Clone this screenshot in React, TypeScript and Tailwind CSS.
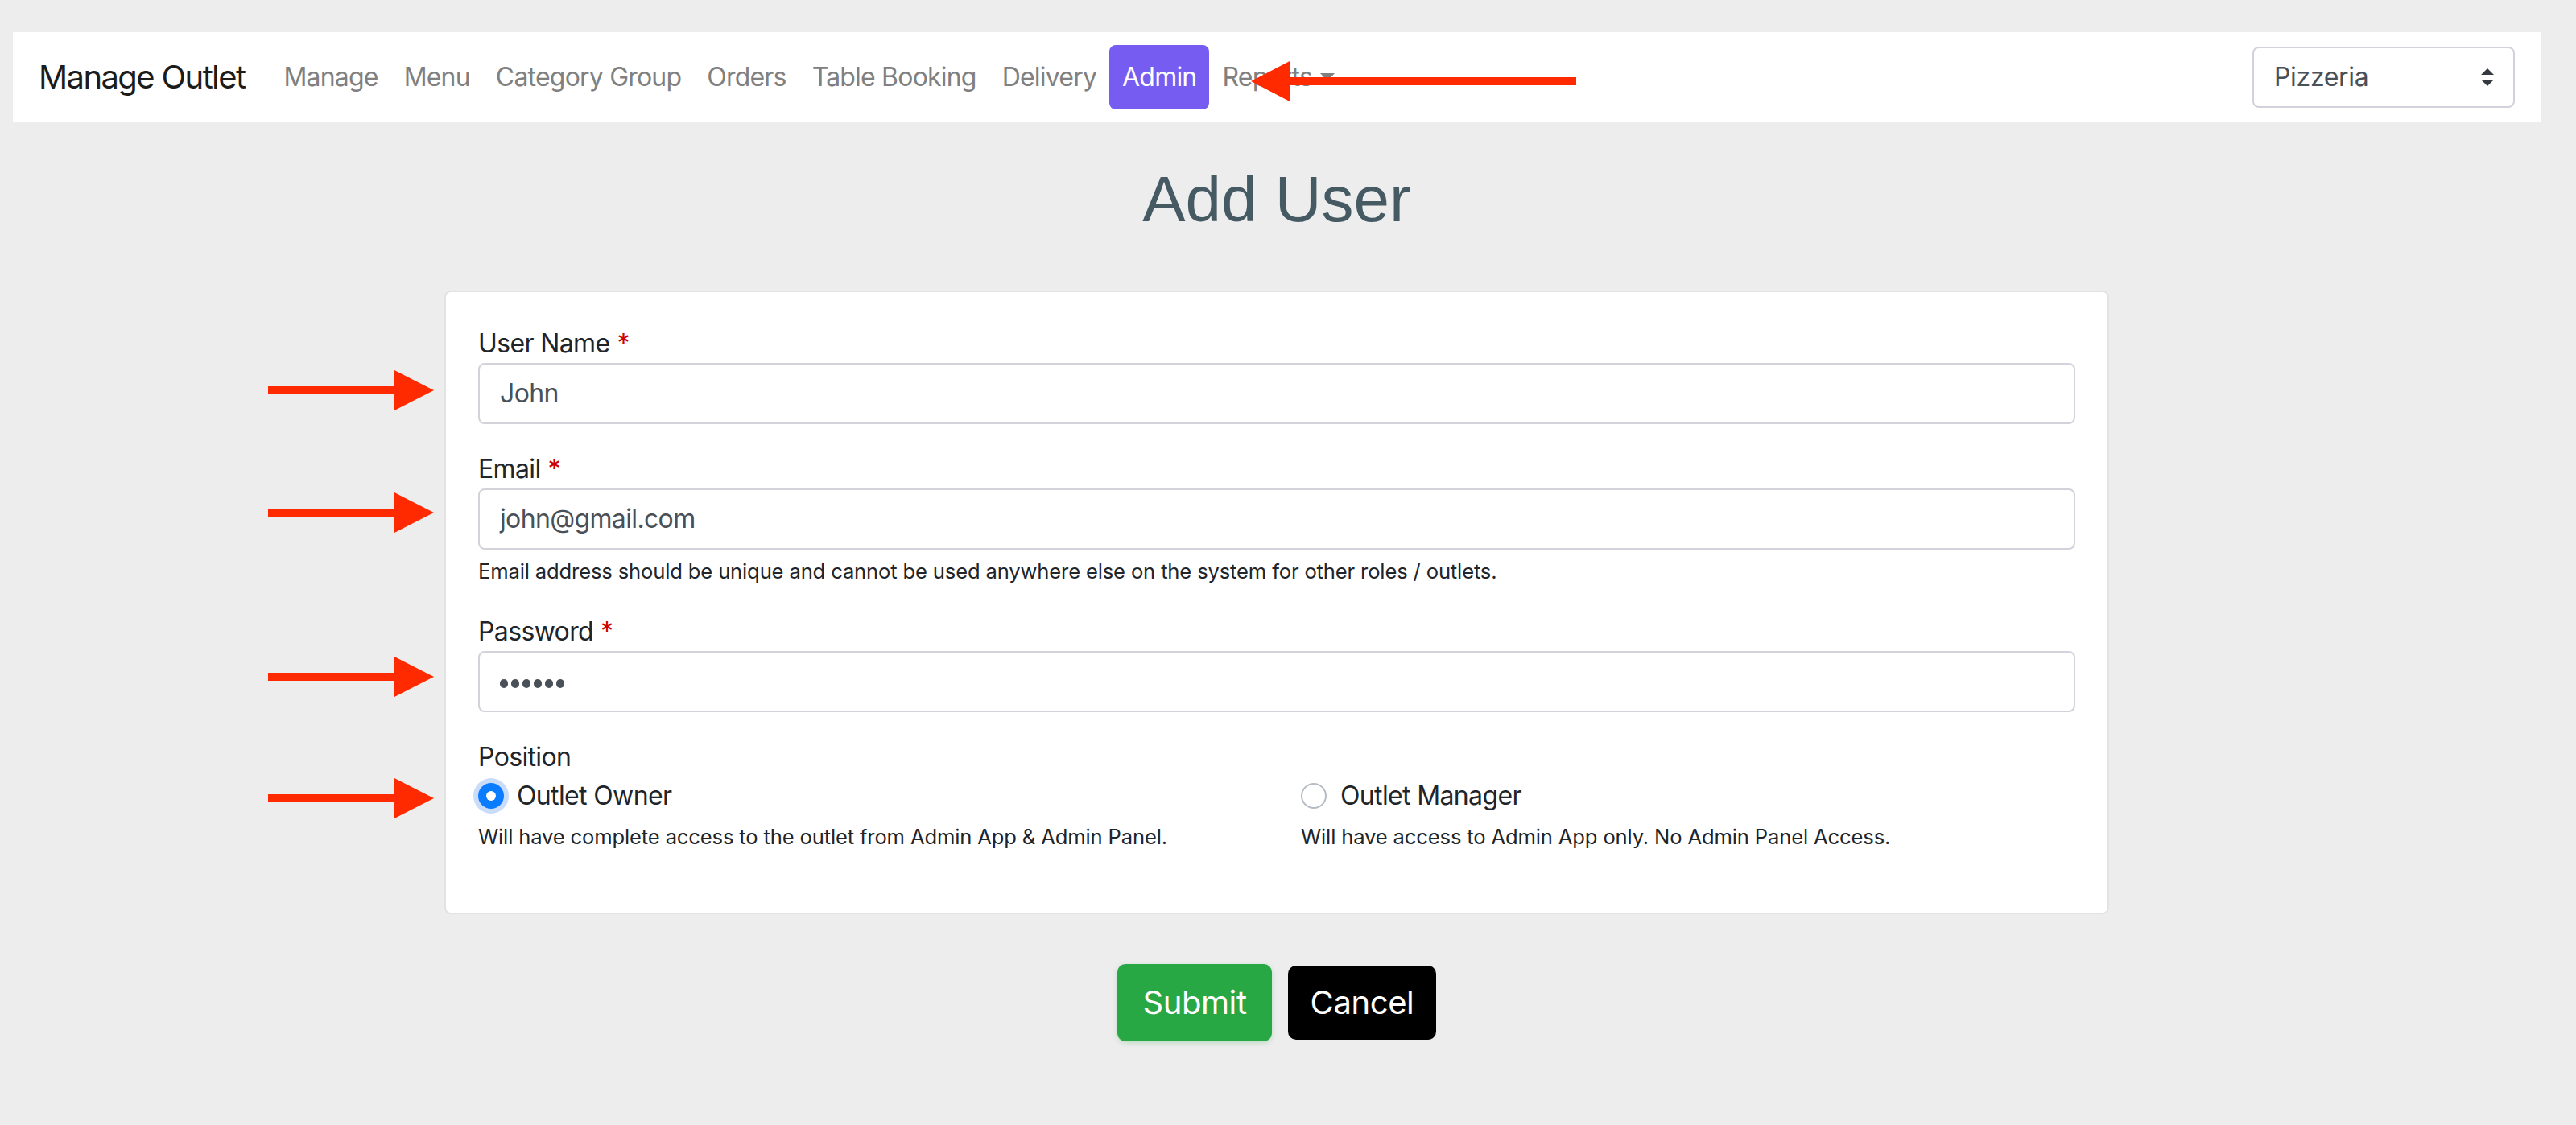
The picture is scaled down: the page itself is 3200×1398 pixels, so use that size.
import React from "react";

const navLinks = ["Manage", "Menu", "Category Group", "Orders", "Table Booking", "Delivery"];

function RightArrow({ top }: { top: number }) {
  return (
    <svg
      className="absolute left-[333px]"
      style={{ top }}
      width="206"
      height="50"
      viewBox="0 0 206 50"
    >
      <path d="M0 20H157V0L206 25L157 50V30H0Z" fill="#ff2a00" />
    </svg>
  );
}

function Field({
  label,
  required,
  children,
}: {
  label: string;
  required?: boolean;
  children: React.ReactNode;
}) {
  return (
    <div className="mb-[32px] flex flex-col">
      <div className="text-[32px] leading-[48px] tracking-[-0.02em] text-[#212529]">
        {label}
        {required && <span className="ml-[9px] text-[#cc0000]">*</span>}
      </div>
      {children}
    </div>
  );
}

function Control({ children }: { children: React.ReactNode }) {
  return (
    <div className="flex h-[76px] items-center rounded-[8px] border-2 border-[#d2d3da] bg-white px-[25px] text-[32px] tracking-[-0.02em] text-[#495057]">
      {children}
    </div>
  );
}

export default function App() {
  return (
    <div
      className="relative min-h-screen w-[3200px] bg-[#ededed] pt-[40px]"
      style={{ fontFamily: "Inter, 'Noto Sans', sans-serif" }}
    >
      <div className="w-[3172px]">
        {/* navbar */}
        <nav className="mx-[16px] flex h-[112px] items-center bg-white px-[32px]">
          <span className="mr-[32px] text-[40px] leading-[60px] tracking-[-0.04em] text-[#1c1c1c]">Manage Outlet</span>
          {navLinks.map((l) => (
            <span key={l} className="px-[16px] text-[32px] leading-[48px] tracking-[-0.025em] text-[#808080]">
              {l}
            </span>
          ))}
          <span className="rounded-[8px] bg-[#765cf0] px-[16px] py-[16px] text-[32px] leading-[48px] tracking-[-0.025em] text-white">
            Admin
          </span>
          <span className="flex items-center px-[16px] text-[32px] leading-[48px] tracking-[-0.025em] text-[#808080]">
            Reports
            <span className="ml-[10px] h-0 w-0 border-x-[9px] border-t-[10px] border-x-transparent border-t-[#808080]" />
          </span>
          <div className="ml-auto flex h-[76px] w-[326px] items-center justify-between rounded-[8px] border-2 border-[#d2d3da] bg-white pl-[25px] pr-[24px] text-[32px] tracking-[-0.01em] text-[#495057]">
            Pizzeria
            <svg width="16" height="22" viewBox="0 0 16 22">
              <path d="M8 0L16 8H0Z M8 22L0 14H16Z" fill="#343a40" />
            </svg>
          </div>
        </nav>

        <h1
          className="mt-[48px] mb-[65px] text-center text-[80px] leading-[96px] text-[#465a64]"
          style={{ fontFamily: "'Liberation Sans', Arial, sans-serif" }}
        >
          Add User
        </h1>

        {/* card */}
        <div className="mx-auto w-[2068px] rounded-[8px] border-2 border-[#e2e2e2] bg-white px-[40px] pt-[40px] pb-[42px]">
          <Field label="User Name" required>
            <Control>John</Control>
          </Field>
          <Field label="Email" required>
            <Control>john@gmail.com</Control>
            <p className="mt-[8px] text-[25.6px] leading-[38.4px] tracking-[-0.006em] text-[#212529]">
              Email address should be unique and cannot be used anywhere else on the system for other roles / outlets.
            </p>
          </Field>
          <Field label="Password" required>
            <Control>
              <span className="flex gap-[4px] pt-[4px]">
                {[0, 1, 2, 3, 4, 5].map((i) => (
                  <span key={i} className="h-[11px] w-[10px] rounded-full bg-[#495057]" />
                ))}
              </span>
            </Control>
          </Field>
          <div className="flex flex-col">
            <div className="text-[32px] leading-[48px] tracking-[-0.02em] text-[#212529]">Position</div>
            <div className="grid grid-cols-2 gap-[60px]">
              <div className="flex flex-col">
                <div className="flex h-[48px] items-center">
                  <span className="flex h-[32px] w-[32px] items-center justify-center rounded-full bg-[#0a7cff] shadow-[0_0_0_6px_#c9ddfb]">
                    <span className="h-[12px] w-[12px] rounded-full bg-white" />
                  </span>
                  <span className="ml-[16px] text-[32px] tracking-[-0.02em] text-[#212529]">Outlet Owner</span>
                </div>
                <p className="mt-[8px] text-[25.6px] leading-[38.4px] tracking-[-0.006em] text-[#212529]">
                  Will have complete access to the outlet from Admin App &amp; Admin Panel.
                </p>
              </div>
              <div className="flex flex-col">
                <div className="flex h-[48px] items-center">
                  <span className="h-[32px] w-[32px] rounded-full border-2 border-[#b5bcc4] bg-white" />
                  <span className="ml-[17px] text-[32px] tracking-[-0.02em] text-[#212529]">Outlet Manager</span>
                </div>
                <p className="mt-[8px] text-[25.6px] leading-[38.4px] tracking-[-0.006em] text-[#212529]">
                  Will have access to Admin App only. No Admin Panel Access.
                </p>
              </div>
            </div>
          </div>
          <div className="h-[32px]" />
        </div>

        {/* actions */}
        <div className="mt-[62px] flex items-center justify-center gap-[20px]">
          <button className="h-[96px] w-[192px] rounded-[10px] bg-[#28a745] text-[40px] tracking-[-0.01em] text-white shadow-[0_2px_6px_rgba(40,167,69,0.25)]">
            Submit
          </button>
          <button className="h-[92px] w-[184px] rounded-[10px] bg-black text-[40px] tracking-[-0.01em] text-white">Cancel</button>
        </div>
      </div>

      {/* annotation arrows */}
      <svg className="absolute left-[1554px] top-[76px]" width="404" height="50" viewBox="0 0 404 50">
        <path d="M0 25L48 0V20H404V30H48V50Z" fill="#ff2a00" />
      </svg>
      <RightArrow top={460} />
      <RightArrow top={612} />
      <RightArrow top={816} />
      <RightArrow top={967} />
    </div>
  );
}
